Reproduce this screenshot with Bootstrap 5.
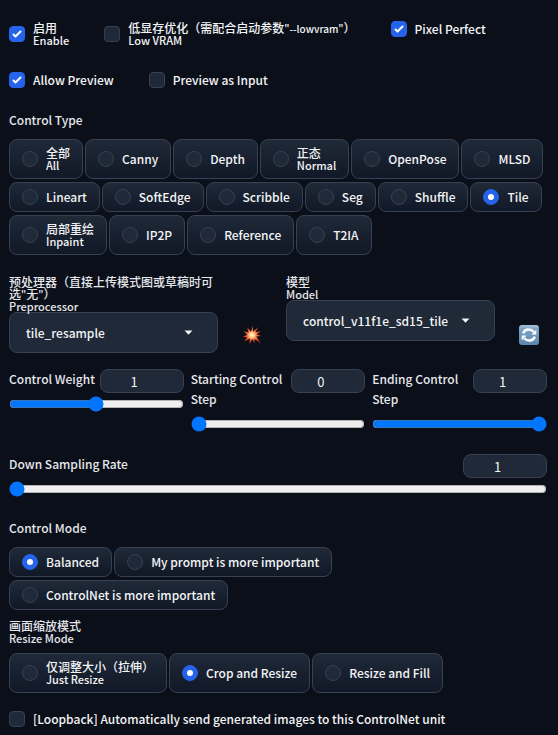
<!DOCTYPE html>
<html lang="zh-CN">
<head>
<meta charset="utf-8">
<meta name="viewport" content="width=device-width, initial-scale=1">
<title>ControlNet</title>
<link href="https://cdn.jsdelivr.net/npm/bootstrap@5.3.0/dist/css/bootstrap.min.css" rel="stylesheet">
<style>
  :root { --edge: #374151; --fill: #1f2937; --blue: #2563eb; }
  body {
    background: #0b0f19; color: #f3f4f6;
    font-family: "Noto Sans CJK SC", sans-serif;
    font-size: 12px; font-weight: 500; line-height: 20px;
  }
  .unit-panel { padding: 19px 11px 5px 9px; }
  .checks { column-gap: 35px; row-gap: 21px; }
  .duo { display: block; font-size: 12px; line-height: 12px; }
  .duo small { display: block; font-size: 11px; line-height: 12px; }
  .latin { font-size: 10px; line-height: 1; }
  .tick { display: flex; align-items: center; gap: 8px; }
  .tick:has(.duo) { padding: 3px 0; }
  .form-check-input.box {
    flex: none; width: 16px; height: 16px; margin: 0;
    background-color: var(--fill); border: 1px solid var(--edge);
  }
  .form-check-input.box[type=checkbox] { border-radius: 4px; }
  .form-check-input.box:checked { background-color: var(--blue); border-color: var(--blue); }
  .form-check-input.box[type=checkbox]:checked {
    background-size: 16px;
    background-image: url("data:image/svg+xml,%3Csvg viewBox='0 0 16 16' fill='white' xmlns='http://www.w3.org/2000/svg'%3E%3Cpath d='M12.207 4.793a1 1 0 010 1.414l-5 5a1 1 0 01-1.414 0l-2-2a1 1 0 011.414-1.414L6.5 9.086l4.293-4.293a1 1 0 011.414 0z'/%3E%3C/svg%3E");
  }
  .form-check-input.box[type=radio]:checked {
    background-size: 16px;
    background-image: url("data:image/svg+xml,%3Csvg viewBox='0 0 16 16' fill='white' xmlns='http://www.w3.org/2000/svg'%3E%3Ccircle cx='8' cy='8' r='3'/%3E%3C/svg%3E");
  }
  .heading { font-size: 12px; line-height: 20px; color: #e5e7eb; margin: 0 0 9px; }
  .heading.duo { line-height: 12px; }
  .pills { column-gap: 2px; row-gap: 3px; }
  .pill {
    display: flex; align-items: center; gap: 8px; padding: 4px 12px;
    border: 1px solid var(--edge); border-radius: 8px;
    background: linear-gradient(to bottom, #1f2937, #111827);
  }
  .pill:has(.duo) { padding-top: 7px; padding-bottom: 7px; }
  .kind { margin-top: 20px; }
  .pickers { margin-top: 21px; }
  .picker { flex: 1 1 0; min-width: 0; }
  .picker .duo { color: #e5e7eb; }
  .form-select.drop {
    height: 41px; padding: 0 36px 0 16px; color: #f3f4f6;
    font-size: 12px; font-weight: 500; line-height: 20px;
    background-color: var(--fill); border: 1px solid var(--edge); border-radius: 8px;
    background-image: url("data:image/svg+xml,%3Csvg viewBox='0 0 9 5' fill='%23f3f4f6' xmlns='http://www.w3.org/2000/svg'%3E%3Cpath d='M0.5 0.5h8L4.5 4.7z'/%3E%3C/svg%3E");
    background-size: 9px 5px; background-position: right 24px center;
  }
  .tool { width: 36px; height: 40px; }
  .sliders { margin-top: 16px; gap: 7px; }
  .slide-col { flex: 1 1 0; min-width: 0; }
  .slide-head { gap: 3px; }
  .slide-head label { color: #e5e7eb; padding-bottom: 4px; }
  .num {
    flex: none; height: 24px; padding: 0 8px; color: #f3f4f6; font-size: 13px; text-align: center;
    background: var(--fill); border: 1px solid var(--edge); border-radius: 8px;
  }
  .num-wide { width: 84px; }
  .num-slim { width: 74px; }
  .slider { display: block; width: 100%; height: 16px; margin: 3px 0 0; accent-color: #0075ff; color-scheme: light; }
  .sampling { margin-top: 22px; }
  .mode { margin-top: 21px; }
  .resize-mode { margin-top: 10px; }
</style>
</head>
<body>
<main class="unit-panel">
  <div class="checks d-flex flex-wrap align-items-start">
    <label class="tick"><input class="form-check-input box" type="checkbox" checked><span class="duo">启用<small>Enable</small></span></label>
    <label class="tick"><input class="form-check-input box" type="checkbox"><span class="duo">低显存优化（需配合启动参数<span class="latin">"--lowvram"</span>）<small>Low VRAM</small></span></label>
    <label class="tick"><input class="form-check-input box" type="checkbox" checked>Pixel Perfect</label>
    <label class="tick"><input class="form-check-input box" type="checkbox" checked>Allow Preview</label>
    <label class="tick"><input class="form-check-input box" type="checkbox">Preview as Input</label>
  </div>

  <fieldset class="kind">
    <legend class="heading">Control Type</legend>
    <div class="pills d-flex flex-wrap">
      <label class="pill"><input class="form-check-input box" type="radio" name="type"><span class="duo">全部<small>All</small></span></label>
      <label class="pill"><input class="form-check-input box" type="radio" name="type">Canny</label>
      <label class="pill"><input class="form-check-input box" type="radio" name="type">Depth</label>
      <label class="pill"><input class="form-check-input box" type="radio" name="type"><span class="duo">正态<small>Normal</small></span></label>
      <label class="pill"><input class="form-check-input box" type="radio" name="type">OpenPose</label>
      <label class="pill"><input class="form-check-input box" type="radio" name="type">MLSD</label>
      <label class="pill"><input class="form-check-input box" type="radio" name="type">Lineart</label>
      <label class="pill"><input class="form-check-input box" type="radio" name="type">SoftEdge</label>
      <label class="pill"><input class="form-check-input box" type="radio" name="type">Scribble</label>
      <label class="pill"><input class="form-check-input box" type="radio" name="type">Seg</label>
      <label class="pill"><input class="form-check-input box" type="radio" name="type">Shuffle</label>
      <label class="pill"><input class="form-check-input box" type="radio" name="type" checked>Tile</label>
      <label class="pill"><input class="form-check-input box" type="radio" name="type"><span class="duo">局部重绘<small>Inpaint</small></span></label>
      <label class="pill"><input class="form-check-input box" type="radio" name="type">IP2P</label>
      <label class="pill"><input class="form-check-input box" type="radio" name="type">Reference</label>
      <label class="pill"><input class="form-check-input box" type="radio" name="type">T2IA</label>
    </div>
  </fieldset>

  <div class="pickers d-flex gap-3 align-items-start">
    <div class="picker">
      <label class="duo" for="prep">预处理器（直接上传模式图或草稿时可选<span class="latin">"</span>无<span class="latin">"</span>）<small>Preprocessor</small></label>
      <select class="form-select drop" id="prep"><option>tile_resample</option></select>
    </div>
    <button class="tool btn p-0 border-0 align-self-end" type="button" aria-label="Run preprocessor">
      <svg width="20" height="20" viewBox="0 0 20 20" aria-hidden="true">
        <defs><radialGradient id="burst"><stop offset="0" stop-color="#fffbe0"/><stop offset=".25" stop-color="#ffd08a"/><stop offset=".5" stop-color="#fb7340"/><stop offset="1" stop-color="#a81a10"/></radialGradient></defs>
        <path fill="url(#burst)" d="M10.800 0.500l.4 6.300L16.500 1.500l-3 5.800 6-1.300-5 3.300 5 1.600-5.200.6 5 7.500-6.700-4.900-.2 4.200-2-4.300-3.200 5.500.8-6L1.500 17l3.800-4.700L.5 12l4.800-2.200L1 6l5.600 1.400L5 2l4 4.800z"/>
      </svg>
    </button>
    <div class="picker">
      <label class="duo" for="model">模型<small>Model</small></label>
      <select class="form-select drop" id="model"><option>control_v11f1e_sd15_tile</option></select>
    </div>
    <button class="tool btn p-0 border-0 align-self-end" type="button" aria-label="Refresh models">
      <svg width="20" height="20" viewBox="0 0 20 20" aria-hidden="true">
        <defs><linearGradient id="plate" x2="0" y2="1"><stop offset="0" stop-color="#a5c4dc"/><stop offset=".2" stop-color="#7ba3c4"/><stop offset="1" stop-color="#5b87ae"/></linearGradient></defs>
        <rect width="20" height="20" rx="3" fill="url(#plate)"/>
        <path d="M4.200 8.400C5.500 3.800 11.500 3.200 14.800 6.800M15.800 11.600C14.500 16.200 8.500 16.800 5.200 13.200" fill="none" stroke="#fff" stroke-width="2.400"/>
        <path d="M17.300 4.800v4.600h-5zM2.700 15.200v-4.600h5z" fill="#fff"/>
      </svg>
    </button>
  </div>

  <div class="sliders d-flex">
    <div class="slide-col">
      <div class="slide-head d-flex justify-content-between align-items-start">
        <label for="weight">Control Weight</label>
        <input class="num num-wide" type="number" value="1" aria-label="Control Weight value">
      </div>
      <input class="slider" id="weight" type="range" min="0" max="2" step="0.05" value="1">
    </div>
    <div class="slide-col">
      <div class="slide-head d-flex justify-content-between align-items-start">
        <label for="start">Starting Control Step</label>
        <input class="num num-slim" type="number" value="0" aria-label="Starting Control Step value">
      </div>
      <input class="slider" id="start" type="range" min="0" max="1" step="0.01" value="0">
    </div>
    <div class="slide-col">
      <div class="slide-head d-flex justify-content-between align-items-start">
        <label for="end">Ending Control Step</label>
        <input class="num num-slim" type="number" value="1" aria-label="Ending Control Step value">
      </div>
      <input class="slider" id="end" type="range" min="0" max="1" step="0.01" value="1">
    </div>
  </div>

  <div class="sampling">
    <div class="slide-head d-flex justify-content-between align-items-start">
      <label for="rate">Down Sampling Rate</label>
      <input class="num num-wide" type="number" value="1" aria-label="Down Sampling Rate value">
    </div>
    <input class="slider" id="rate" type="range" min="1" max="8" step="0.01" value="1">
  </div>

  <fieldset class="mode">
    <legend class="heading">Control Mode</legend>
    <div class="pills d-flex flex-wrap">
      <label class="pill"><input class="form-check-input box" type="radio" name="mode" checked>Balanced</label>
      <label class="pill"><input class="form-check-input box" type="radio" name="mode">My prompt is more important</label>
      <label class="pill"><input class="form-check-input box" type="radio" name="mode">ControlNet is more important</label>
    </div>
  </fieldset>

  <fieldset class="resize-mode">
    <legend class="heading duo">画面缩放模式<small>Resize Mode</small></legend>
    <div class="pills d-flex flex-wrap">
      <label class="pill"><input class="form-check-input box" type="radio" name="resize"><span class="duo">仅调整大小（拉伸）<small>Just Resize</small></span></label>
      <label class="pill"><input class="form-check-input box" type="radio" name="resize" checked>Crop and Resize</label>
      <label class="pill"><input class="form-check-input box" type="radio" name="resize">Resize and Fill</label>
    </div>
  </fieldset>

  <label class="tick mt-3"><input class="form-check-input box" type="checkbox">[Loopback] Automatically send generated images to this ControlNet unit</label>
</main>
<script src="https://cdn.jsdelivr.net/npm/bootstrap@5.3.0/dist/js/bootstrap.bundle.min.js"></script>
</body>
</html>
